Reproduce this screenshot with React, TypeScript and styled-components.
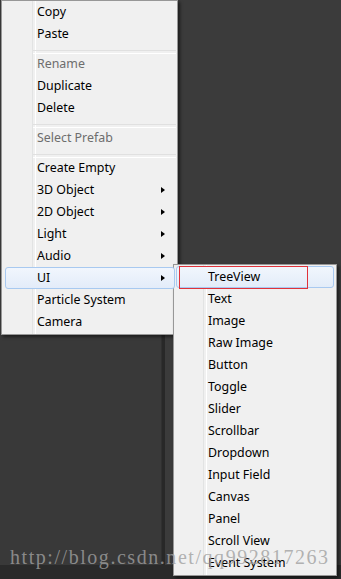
import React from "react";
import styled, { createGlobalStyle } from "styled-components";

const GlobalStyle = createGlobalStyle`
  html, body { margin: 0; padding: 0; background: #393939; overflow: hidden; }
  * { box-sizing: border-box; }
`;

const Editor = styled.div`
  position: relative;
  width: 341px;
  height: 579px;
  display: flex;
  flex-direction: column;
  background: #393939;
  overflow: hidden;
`;

const Panes = styled.div`
  flex: 1;
  display: flex;
`;

const LeftPane = styled.div`
  width: 161px;
  background: #393939;
`;

const Divider = styled.div`
  width: 4px;
  background: #282828;
  border-left: 1px solid #303030;
`;

const RightPane = styled.div`
  flex: 1;
  background: #3b3b3b;
`;

const BottomBar = styled.div`
  height: 14px;
  background: #2a2a2a;
`;

const Menu = styled.div<{ $left: number; $top: number; $width: number; $pt: number; $pb: number; $gutter: number }>`
  position: absolute;
  left: ${(p) => p.$left}px;
  top: ${(p) => p.$top}px;
  width: ${(p) => p.$width}px;
  padding: ${(p) => p.$pt}px 0 ${(p) => p.$pb}px;
  background: #f0f0f0;
  border: 1px solid #979797;
  box-shadow: 2px 2px 3px rgba(0, 0, 0, 0.5);
  font-family: "Noto Sans", "Open Sans", sans-serif;
  font-size: 12.4px;
  display: flex;
  flex-direction: column;
  &::before {
    content: "";
    position: absolute;
    top: 0;
    bottom: 0;
    left: ${(p) => p.$gutter}px;
    width: 2px;
    border-left: 1px solid #e2e3e3;
    border-right: 1px solid #ffffff;
  }
`;

const Item = styled.div<{ $disabled?: boolean; $active?: boolean; $ml: number; $pl: number }>`
  position: relative;
  z-index: 1;
  height: 22px;
  display: flex;
  align-items: center;
  justify-content: space-between;
  margin: 0 2px 0 ${(p) => p.$ml}px;
  padding: 0 9px 0 ${(p) => p.$pl}px;
  color: ${(p) => (p.$disabled ? "#6d6d6d" : "#000000")};
  border: 1px solid ${(p) => (p.$active ? "#a8c9f0" : "transparent")};
  border-radius: 3px;
  background: ${(p) =>
    p.$active ? "linear-gradient(to bottom, #f1f6fd, #e3ecf9)" : "transparent"};
  white-space: nowrap;
`;

const Label = styled.span`
  line-height: 20px;
`;

const Arrow = styled.span`
  width: 0;
  height: 0;
  border-top: 3.5px solid transparent;
  border-bottom: 3.5px solid transparent;
  border-left: 4px solid #000;
`;

const Separator = styled.div`
  position: relative;
  z-index: 1;
  height: 8px;
  margin-left: 31px;
  margin-right: 1px;
  padding-top: 5px;
  &::after {
    content: "";
    display: block;
    height: 2px;
    border-top: 1px solid #e0e0e0;
    border-bottom: 1px solid #ffffff;
  }
`;

const Annotation = styled.div`
  position: absolute;
  left: 2px;
  top: -1px;
  width: 129px;
  height: 23px;
  border: 1px solid #e0323a;
  pointer-events: none;
`;

const Watermark = styled.div`
  position: absolute;
  left: 10px;
  top: 546px;
  z-index: 5;
  font-family: "Liberation Serif", "DejaVu Serif", serif;
  font-size: 20px;
  letter-spacing: 1.55px;
  color: rgba(160, 160, 160, 0.8);
  white-space: nowrap;
  pointer-events: none;
`;

type Entry = { label?: string; sep?: boolean; disabled?: boolean; sub?: boolean; active?: boolean };

const mainItems: Entry[] = [
  { label: "Copy" },
  { label: "Paste" },
  { sep: true },
  { label: "Rename", disabled: true },
  { label: "Duplicate" },
  { label: "Delete" },
  { sep: true },
  { label: "Select Prefab", disabled: true },
  { sep: true },
  { label: "Create Empty" },
  { label: "3D Object", sub: true },
  { label: "2D Object", sub: true },
  { label: "Light", sub: true },
  { label: "Audio", sub: true },
  { label: "UI", sub: true, active: true },
  { label: "Particle System" },
  { label: "Camera" },
];

const uiItems = [
  "TreeView",
  "Text",
  "Image",
  "Raw Image",
  "Button",
  "Toggle",
  "Slider",
  "Scrollbar",
  "Dropdown",
  "Input Field",
  "Canvas",
  "Panel",
  "Scroll View",
  "Event System",
];

export default function App() {
  return (
    <>
      <GlobalStyle />
      <Editor>
        <Panes>
          <LeftPane />
          <Divider />
          <RightPane />
        </Panes>
        <BottomBar />

        <Menu $left={1} $top={0} $width={177} $pt={0} $pb={1} $gutter={30}>
          {mainItems.map((it, i) =>
            it.sep ? (
              <Separator key={i} />
            ) : (
              <Item key={i} $disabled={it.disabled} $active={it.active} $ml={3} $pl={31}>
                <Label>{it.label}</Label>
                {it.sub && <Arrow />}
              </Item>
            )
          )}
        </Menu>

        <Menu $left={173} $top={264} $width={164} $pt={1} $pb={1} $gutter={29}>
          {uiItems.map((label, i) => (
            <Item key={label} $active={i === 0} $ml={2} $pl={31}>
              <Label>{label}</Label>
              {i === 0 && <Annotation />}
            </Item>
          ))}
        </Menu>

        <Watermark>http://blog.csdn.net/qq992817263</Watermark>
      </Editor>
    </>
  );
}
